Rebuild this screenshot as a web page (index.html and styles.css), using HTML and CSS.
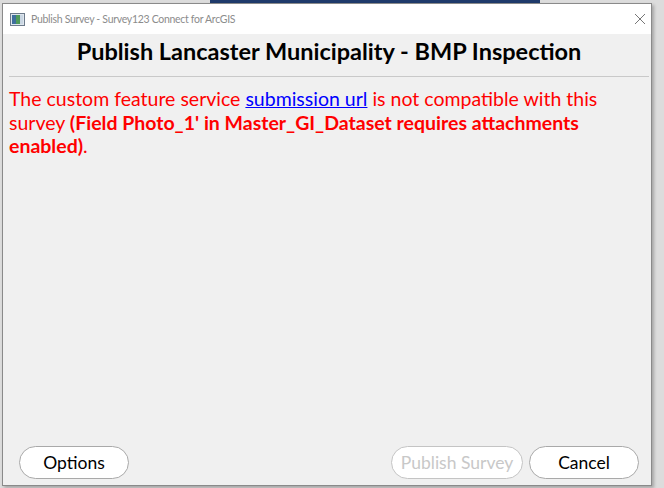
FILE: index.html
```
<!DOCTYPE html>
<html lang="en">
<head>
	<meta charset="UTF-8">
	<title>Publish Survey</title>
	<link rel="stylesheet" href="styles.css">
</head>
<body>
	<div class="desk-strip"></div>
	<div class="window">
		<div class="titlebar">
			<svg class="app-icon" width="15" height="13" viewBox="0 0 15 13">
				<rect x="0.5" y="0.5" width="14" height="12" fill="#dfe6ee" stroke="#6c7a8a"/>
				<rect x="2" y="2" width="4" height="9" fill="#3f6f9c"/>
				<rect x="6" y="2" width="4" height="9" fill="#4f9a5a"/>
				<rect x="10" y="2" width="3" height="9" fill="#c9d6e2"/>
			</svg>
			<span class="title-text">Publish Survey - Survey123 Connect for ArcGIS</span>
			<svg class="close-icon" width="12" height="12" viewBox="0 0 12 12">
				<path d="M1 1 L11 11 M11 1 L1 11" stroke="#777" stroke-width="1"/>
			</svg>
		</div>
		<div class="content">
			<h1>Publish Lancaster Municipality - BMP Inspection</h1>
			<hr>
			<p class="message">The custom feature service <a href="#">submission url</a> is not compatible with this survey <b>(Field Photo_1' in Master_GI_Dataset requires attachments enabled)</b>.</p>
			<div class="buttons">
				<button class="btn">Options</button>
				<span class="spacer"></span>
				<button class="btn publish" disabled>Publish Survey</button>
				<button class="btn">Cancel</button>
			</div>
		</div>
	</div>
</body>
</html>
```
FILE: styles.css
```
html, body {
	margin: 0;
	height: 100%;
	overflow: hidden;
}
body {
	background-color: #dcdcdc;
	font-family: Lato, "Open Sans", sans-serif;
}
.desk-strip {
	height: 3px;
	margin-left: 210px;
	width: 330px;
	background-color: #1f3a6b;
}
.window {
	margin-left: 2px;
	width: 648px;
	height: 481px;
	border: 1px solid #8a8a8a;
	background-color: #f0f0f0;
	display: flex;
	flex-direction: column;
	box-shadow: 2px 2px 3px rgba(0, 0, 0, 0.25);
}
.titlebar {
	height: 30px;
	background-color: #fff;
	display: flex;
	align-items: center;
	padding: 0 5px 0 7px;
}
.app-icon {
	margin-right: 6px;
}
.title-text {
	font-family: Lato, sans-serif;
	font-size: 10.5px;
	letter-spacing: -0.3px;
	color: #8c8c8c;
	flex: 1;
}
.content {
	flex: 1;
	display: flex;
	flex-direction: column;
	padding: 0 2px 6px 6px;
}
h1 {
	margin: 2px 0 0;
	text-align: center;
	font-size: 23.5px;
	line-height: 30px;
	font-weight: bold;
	color: #000;
}
hr {
	border: 0;
	border-top: 1px solid #c9c9c9;
	margin: 10px 0 0;
}
.message {
	margin: 10px 0 0;
	font-size: 19.5px;
	line-height: 23.5px;
	color: #ff0000;
}
.message a {
	color: #0000ff;
}
.buttons {
	margin-top: auto;
	display: flex;
	gap: 6px;
	padding: 0 10px 0 10px;
}
.spacer {
	flex: 1;
}
.btn {
	width: 110px;
	height: 33px;
	border-radius: 17px;
	border: 1px solid #a9a9a9;
	background-color: #fff;
	font-family: Lato, sans-serif;
	font-size: 17.5px;
	color: #000;
}
.btn.publish {
	width: 132px;
	color: #c8c8c8;
	border-color: #c4c4c4;
}
```
